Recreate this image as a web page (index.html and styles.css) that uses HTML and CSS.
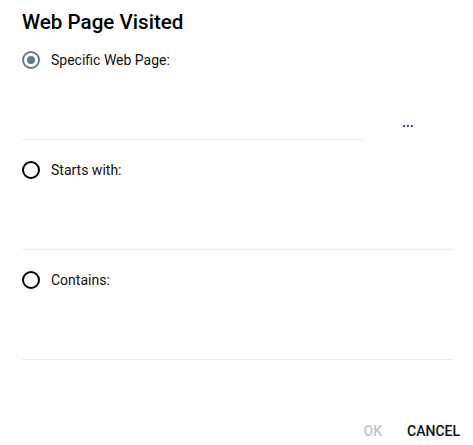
FILE: index.html
```html
<!DOCTYPE html>
<html>
<head>
<meta charset="utf-8">
<link rel="stylesheet" href="styles.css">
</head>
<body>
<div class="dialog">
  <h1 class="title">Web Page Visited</h1>
  <div class="options">
    <div class="option">
      <label class="radio-row">
        <span class="radio radio--checked"></span>
        <span class="radio-label">Specific Web Page:</span>
      </label>
      <div class="field-row">
        <div class="field field--short"></div>
        <button class="browse">...</button>
      </div>
    </div>
    <div class="option">
      <label class="radio-row">
        <span class="radio"></span>
        <span class="radio-label">Starts with:</span>
      </label>
      <div class="field-row">
        <div class="field"></div>
      </div>
    </div>
    <div class="option">
      <label class="radio-row">
        <span class="radio"></span>
        <span class="radio-label">Contains:</span>
      </label>
      <div class="field-row">
        <div class="field"></div>
      </div>
    </div>
  </div>
  <div class="actions">
    <button class="action action--disabled">OK</button>
    <button class="action">CANCEL</button>
  </div>
</div>
</body>
</html>
```

FILE: styles.css
```css
* { box-sizing: border-box; }
html, body {
  margin: 0;
  padding: 0;
  background: #fff;
}
body {
  font-family: Roboto, "Liberation Sans", sans-serif;
  color: #000;
  width: 473px;
  height: 445px;
  overflow: hidden;
}
.dialog {
  padding: 10px 20px 0 22px;
  display: flex;
  flex-direction: column;
}
.title {
  margin: 0;
  font-size: 20.6px;
  line-height: 24px;
  font-weight: 500;
  color: #000;
}
.options {
  display: flex;
  flex-direction: column;
  gap: 18px;
  margin-top: 14px;
}
.option {
  display: flex;
  flex-direction: column;
}
.radio-row {
  display: flex;
  align-items: center;
  height: 24px;
  gap: 11px;
}
.radio {
  width: 18px;
  height: 18px;
  border: 2px solid #000;
  border-radius: 50%;
  display: flex;
  align-items: center;
  justify-content: center;
  flex: none;
}
.radio--checked {
  border-color: #607d8b;
}
.radio--checked::after {
  content: "";
  width: 8px;
  height: 8px;
  border-radius: 50%;
  background: #607d8b;
}
.radio-label {
  font-size: 14px;
  line-height: 16px;
  color: #111;
}
.field-row {
  display: flex;
  height: 68px;
}
.field {
  flex: 1;
  border-bottom: 1px dotted #dcdcdc;
}
.field--short {
  flex: none;
  width: 341px;
}
.browse {
  flex: 1;
  align-self: flex-end;
  margin-bottom: 10px;
  background: none;
  border: 0;
  padding: 0;
  font-family: inherit;
  font-size: 14px;
  font-weight: 500;
  line-height: 16px;
  color: #222;
  text-align: center;
}
.actions {
  display: flex;
  justify-content: flex-end;
  gap: 25px;
  margin-top: 63px;
  margin-right: -7px;
}
.action {
  background: none;
  border: 0;
  padding: 0;
  font-family: inherit;
  font-size: 14px;
  font-weight: 500;
  line-height: 16px;
  color: #111;
}
.action--disabled {
  color: #c4c4c4;
}
```
